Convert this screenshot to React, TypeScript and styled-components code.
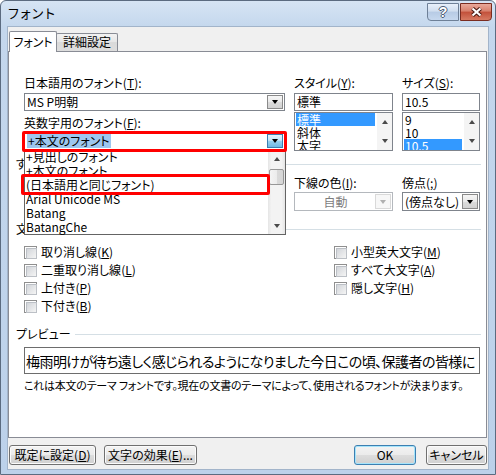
import React from "react";
import styled, {createGlobalStyle} from "styled-components";

const UI_FONT = `"Noto Sans CJK JP", "Liberation Sans", sans-serif`;

const GlobalStyle = createGlobalStyle`
    html, body {
        margin: 0;
        padding: 0;
    }
    body {
        width: 496px;
        height: 475px;
        overflow: hidden;
        background: #fff;
        font-family: ${UI_FONT};
        font-size: 12px;
        line-height: 14px;
        color: #000;
        font-feature-settings: "palt";
    }
    * {
        box-sizing: border-box;
    }
`;

const topFonts = ["+見出しのフォント", "+本文のフォント", "(日本語用と同じフォント)", "Arial Unicode MS", "Batang", "BatangChe"];

const leftChecks: [string, string][] = [["取り消し線", "K"], ["二重取り消し線", "L"], ["上付き", "P"], ["下付き", "B"]];
const rightChecks: [string, string][] = [["小型英大文字", "M"], ["すべて大文字", "A"], ["隠し文字", "H"]];

const Mnemonic = ({text, k, tail = ""}: { text: string, k: string, tail?: string }) => (
    <>{text}(<Key>{k}</Key>){tail}</>
);

export default function App() {
    return (
        <>
            <GlobalStyle/>
            <Window>
                <TitleBar>
                    <Title>フォント</Title>
                    <CaptionButtons>
                        <HelpButton>?</HelpButton>
                        <CloseButton>
                            <svg width="13" height="10" viewBox="0 0 13 10">
                                <path d="M2.5 1.5 L10.5 8.5 M10.5 1.5 L2.5 8.5" stroke="#4a1a12" strokeWidth="4.2"/>
                                <path d="M2.5 1.5 L10.5 8.5 M10.5 1.5 L2.5 8.5" stroke="#fff" strokeWidth="2.2"/>
                            </svg>
                        </CloseButton>
                    </CaptionButtons>
                </TitleBar>
                <Client>
                    <TabStrip>
                        <Tab $active $w={48}>フォント</Tab>
                        <Tab $w={62}>詳細設定</Tab>
                    </TabStrip>
                    <Panel>
                        <FontGrid>
                            <Column>
                                <Label><Mnemonic text="日本語用のフォント" k="T" tail=":"/></Label>
                                <Combo $mt={3}>
                                    <ComboText>MS P明朝</ComboText>
                                    <DropButton/>
                                </Combo>
                                <Label $mt={5}><Mnemonic text="英数字用のフォント" k="F" tail=":"/></Label>
                                <Combo $mt={2}>
                                    <ComboText><Selected>+本文のフォント</Selected></ComboText>
                                    <DropButton $hot/>
                                    <RedMark $t={-2} $r={-3} $b={-3} $l={-3}/>
                                    <DropList>
                                        <DropItems>
                                            {topFonts.map((f, i) => (
                                                <DropRow key={f}>
                                                    {f}
                                                    {i === 2 && <RedMark $t={-4} $r={-2} $b={-3} $l={-4}/>}
                                                </DropRow>
                                            ))}
                                        </DropItems>
                                        <ScrollBar>
                                            <ScrollArrow/>
                                            <Thumb/>
                                            <ScrollArrow $down/>
                                        </ScrollBar>
                                    </DropList>
                                </Combo>
                            </Column>
                            <Column>
                                <Label><Mnemonic text="スタイル" k="Y" tail=":"/></Label>
                                <Edit>標準</Edit>
                                <ListBox>
                                    <ListItems>
                                        <ListRow $selected>標準</ListRow>
                                        <ListRow>斜体</ListRow>
                                        <ListRow>太字</ListRow>
                                    </ListItems>
                                    <MiniScroll>
                                        <ScrollArrow $small/>
                                        <ScrollArrow $small $down/>
                                    </MiniScroll>
                                </ListBox>
                            </Column>
                            <Column>
                                <Label><Mnemonic text="サイズ" k="S" tail=":"/></Label>
                                <Edit>10.5</Edit>
                                <ListBox>
                                    <ListItems>
                                        <ListRow>9</ListRow>
                                        <ListRow>10</ListRow>
                                        <ListRow $selected>10.5</ListRow>
                                    </ListItems>
                                    <MiniScroll>
                                        <ScrollArrow $small/>
                                        <ScrollArrow $small $down/>
                                    </MiniScroll>
                                </ListBox>
                            </Column>
                        </FontGrid>

                        <SectionHeader $mt={6}>すべての文字列</SectionHeader>
                        <EffectsGrid>
                            {/* these two sit under the open drop-down list */}
                            <Column $covered>
                                <Label><Mnemonic text="フォントの色" k="C" tail=":"/></Label>
                                <Combo $mt={2} $h={19}>
                                    <ComboText>自動</ComboText>
                                    <DropButton/>
                                </Combo>
                            </Column>
                            <Column $covered>
                                <Label><Mnemonic text="下線" k="U" tail=":"/></Label>
                                <Combo $mt={2} $h={19}>
                                    <ComboText>(下線なし)</ComboText>
                                    <DropButton/>
                                </Combo>
                            </Column>
                            <Column>
                                <Label><Mnemonic text="下線の色" k="I" tail=":"/></Label>
                                <Combo $mt={2} $h={19} $disabled>
                                    <ComboText $center>自動</ComboText>
                                    <DropButton $disabled/>
                                </Combo>
                            </Column>
                            <Column>
                                <Label><Mnemonic text="傍点" k=";"/></Label>
                                <Combo $mt={2} $h={19}>
                                    <ComboText>(傍点なし)</ComboText>
                                    <DropButton/>
                                </Combo>
                            </Column>
                        </EffectsGrid>

                        <SectionHeader $mt={11}>文字飾り</SectionHeader>
                        <CheckGrid>
                            {[...leftChecks, ...rightChecks].map(([t, k]) => (
                                <CheckRow key={t}>
                                    <CheckBox/>
                                    <span><Mnemonic text={t} k={k}/></span>
                                </CheckRow>
                            ))}
                        </CheckGrid>

                        <SectionHeader $mt={12}>プレビュー</SectionHeader>
                        <PreviewBox>梅雨明けが待ち遠しく感じられるようになりました今日この頃、保護者の皆様に</PreviewBox>
                        <Note>これは本文のテーマ フォントです。現在の文書のテーマによって、使用されるフォントが決まります。</Note>
                    </Panel>
                    <ButtonRow>
                        <ButtonGroup $gap={8}>
                            <PushButton $w={87}><Mnemonic text="既定に設定" k="D"/></PushButton>
                            <PushButton $w={93}><Mnemonic text="文字の効果" k="E" tail="..."/></PushButton>
                        </ButtonGroup>
                        <ButtonGroup $gap={10}>
                            <PushButton $w={62} $default>OK</PushButton>
                            <PushButton $w={61}>キャンセル</PushButton>
                        </ButtonGroup>
                    </ButtonRow>
                </Client>
            </Window>
        </>
    );
}

const Window = styled.div`
    width: 496px;
    height: 475px;
    display: flex;
    flex-direction: column;
    padding: 0 6px 4px 6px;
    border: 1px solid #5b6b80;
    border-radius: 6px 6px 0 0;
    background: linear-gradient(to bottom, #d6e4f4 0, #c4d7ed 26px, #bcd1ea 100%);`
;
const TitleBar = styled.div`
    height: 25px;
    flex-shrink: 0;
    display: flex;
    justify-content: space-between;
    align-items: flex-start;
    margin-right: -3px;`
;
const Title = styled.div`
    padding-top: 5px;
    font-size: 13px;
    letter-spacing: -1px;
    font-feature-settings: normal;`
;
const CaptionButtons = styled.div`
    display: flex;
    gap: 1px;
    margin-top: 2px;`
;
const HelpButton = styled.div`
    width: 32px;
    height: 18px;
    border: 1px solid #6e8097;
    border-radius: 0 0 0 4px;
    background: linear-gradient(#e8f0fa 0%, #d0deef 45%, #b7cbe5 50%, #c6d8ee 100%);
    display: flex;
    align-items: center;
    justify-content: center;
    font-family: "Liberation Sans", sans-serif;
    font-weight: bold;
    font-size: 14px;
    color: #fff;
    text-shadow: 1px 0 0 #4b5c74, -1px 0 0 #4b5c74, 0 1px 0 #4b5c74, 0 -1px 0 #4b5c74;`
;
const CloseButton = styled.div`
    width: 32px;
    height: 18px;
    border: 1px solid #7a2c20;
    border-radius: 0 0 4px 0;
    background: linear-gradient(#e9a99a 0%, #d8806c 45%, #c2503a 50%, #d67a62 100%);
    display: flex;
    align-items: center;
    justify-content: center;`
;
const Client = styled.div`
    flex: 1;
    display: flex;
    flex-direction: column;
    padding: 4px 0 0 0;
    background: #f0f0f0;
    border: 1px solid #a2b4ca;`
;
const TabStrip = styled.div`
    height: 20px;
    display: flex;
    align-items: flex-end;
    padding-left: 1px;`
;
const Tab = styled.div<{ $active?: boolean, $w: number }>`
    position: relative;
    z-index: ${p => p.$active ? 1 : 0};
    width: ${p => p.$w}px;
    height: ${p => p.$active ? 21 : 18}px;
    margin-bottom: ${p => p.$active ? -1 : 0}px;
    margin-left: ${p => p.$active ? 0 : -1}px;
    padding-top: ${p => p.$active ? 3 : 1}px;
    border: 1px solid #898c95;
    border-bottom: none;
    border-radius: 2px 2px 0 0;
    background: ${p => p.$active ? "#fff" : "linear-gradient(#f2f2f2, #e6e6e6 50%, #dadada 50%, #dddddd)"};
    text-align: center;`
;
const Panel = styled.div`
    height: 387px;
    margin-right: 1px;
    padding: 24px 5px 0 7px;
    border: 1px solid #898c95;
    background: #fff;
    display: flex;
    flex-direction: column;`
;
const FontGrid = styled.div`
    margin-left: 8px;
    display: grid;
    grid-template-columns: 261px 99px 78px;
    column-gap: 9px;`
;
const EffectsGrid = styled.div`
    margin: 5px 0 0 8px;
    display: grid;
    grid-template-columns: 118px 134px 99px 78px;
    column-gap: 9px;`
;
const Column = styled.div<{ $covered?: boolean }>`
    display: flex;
    flex-direction: column;
    visibility: ${p => p.$covered ? "hidden" : "visible"};`
;
const Label = styled.div<{ $mt?: number }>`
    height: 14px;
    margin-top: ${p => p.$mt ?? 0}px;
    white-space: nowrap;`
;
const Key = styled.span`
    text-decoration: underline;`
;
const Combo = styled.div<{ $mt?: number, $h?: number, $disabled?: boolean }>`
    position: relative;
    display: flex;
    height: ${p => p.$h ?? 18}px;
    margin-top: ${p => p.$mt ?? 0}px;
    border: 1px solid ${p => p.$disabled ? "#b4b8bd" : "#7f848c"};
    background: #fff;
    color: ${p => p.$disabled ? "#7d7d7d" : "#000"};`
;
const ComboText = styled.div<{ $center?: boolean }>`
    flex: 1;
    display: flex;
    align-items: center;
    justify-content: ${p => p.$center ? "center" : "flex-start"};
    padding-left: 2px;
    white-space: nowrap;
    overflow: hidden;`
;
const Selected = styled.span`
    background: #9dc7ef;
    padding: 0 1px;`
;
const DropButton = styled.div<{ $hot?: boolean, $disabled?: boolean }>`
    width: 16px;
    margin: 1px;
    display: flex;
    align-items: center;
    justify-content: center;
    border: 1px solid ${p => p.$hot ? "#3c7fb1" : p.$disabled ? "#d9d9d9" : "#8a8a8a"};
    background: ${p => p.$hot
            ? "linear-gradient(#e5f4fc, #c4e5f6 45%, #98d1ef 50%, #6fb8e3)"
            : p.$disabled ? "#f7f7f7" : "linear-gradient(#f6f6f6, #e9e9e9 50%, #dcdcdc 50%, #d2d2d2)"};
    &::after {
        content: "";
        border-left: 3.5px solid transparent;
        border-right: 3.5px solid transparent;
        border-top: 4px solid ${p => p.$disabled ? "#b0b0b0" : "#000"};
    }`
;
const RedMark = styled.div<{ $t: number, $r: number, $b: number, $l: number }>`
    position: absolute;
    top: ${p => p.$t}px;
    right: ${p => p.$r}px;
    bottom: ${p => p.$b}px;
    left: ${p => p.$l}px;
    border: 3px solid #ff0000;
    border-radius: 2px;
    pointer-events: none;
    z-index: 6;`
;
const DropList = styled.div`
    position: absolute;
    top: 100%;
    left: -1px;
    width: calc(100% + 3px);
    height: 86px;
    z-index: 5;
    display: flex;
    border: 1px solid #646464;
    background: #fff;`
;
const DropItems = styled.div`
    flex: 1;`
;
const DropRow = styled.div`
    position: relative;
    height: 14px;
    padding-left: 1px;
    white-space: nowrap;`
;
const ScrollBar = styled.div`
    width: 17px;
    display: flex;
    flex-direction: column;
    background: linear-gradient(to right, #e5e5e5, #f3f3f3 20%, #f3f3f3 80%, #e5e5e5);`
;
const ScrollArrow = styled.div<{ $down?: boolean, $small?: boolean }>`
    height: ${p => p.$small ? 18 : 17}px;
    display: flex;
    align-items: center;
    justify-content: center;
    margin-top: ${p => p.$down && !p.$small ? "auto" : "0"};
    &::after {
        content: "";
        border-left: 3.5px solid transparent;
        border-right: 3.5px solid transparent;
        ${p => p.$down ? "border-top" : "border-bottom"}: 4px solid #4a4a4a;
    }`
;
const Thumb = styled.div`
    height: 16px;
    margin: 2px 1px 0 1px;
    border: 1px solid #979797;
    border-radius: 2px;
    background: linear-gradient(to right, #f4f4f4, #ececec 50%, #dadada 50%, #d6d6d6);`
;
const Edit = styled.div`
    height: 18px;
    margin-top: 3px;
    padding-left: 2px;
    display: flex;
    align-items: center;
    border: 1px solid #7f848c;
    background: #fff;`
;
const ListBox = styled.div`
    height: 39px;
    margin-top: 1px;
    display: flex;
    overflow: hidden;
    border: 1px solid #7f848c;
    background: #fff;`
;
const ListItems = styled.div`
    flex: 1;
    padding: 0 2px 0 1px;`
;
const ListRow = styled.div<{ $selected?: boolean }>`
    height: 13px;
    line-height: 13px;
    padding-left: 1px;
    white-space: nowrap;
    background: ${p => p.$selected ? "#3399ff" : "transparent"};
    color: ${p => p.$selected ? "#fff" : "#000"};`
;
const MiniScroll = styled.div`
    width: 15px;
    display: flex;
    flex-direction: column;
    justify-content: space-between;
    background: #f4f4f4;`
;
const SectionHeader = styled.div<{ $mt: number }>`
    height: 14px;
    margin-top: ${p => p.$mt}px;
    display: flex;
    align-items: center;
    white-space: nowrap;
    &::after {
        content: "";
        flex: 1;
        height: 1px;
        margin-left: 4px;
        background: #d5dfe5;
    }`
;
const CheckGrid = styled.div`
    margin: 7px 0 0 8px;
    display: grid;
    grid-template-columns: 310px 1fr;
    grid-template-rows: repeat(4, 18px);
    grid-auto-flow: column;`
;
const CheckRow = styled.label`
    display: flex;
    align-items: center;
    gap: 4px;
    white-space: nowrap;`
;
const CheckBox = styled.span`
    width: 13px;
    height: 13px;
    padding: 1px;
    border: 1px solid #8f8f8f;
    background: #fff;
    &::before {
        content: "";
        display: block;
        width: 100%;
        height: 100%;
        border: 1px solid #bcc0c6;
        background: linear-gradient(135deg, #d2d5da, #f5f5f5);
    }`
;
const PreviewBox = styled.div`
    width: 456px;
    height: 27px;
    margin: 6px 0 0 8px;
    padding-left: 1px;
    display: flex;
    align-items: center;
    border: 1px solid #6d6d6d;
    background: #fff;
    font-size: 14px;
    letter-spacing: -0.55px;
    white-space: nowrap;
    overflow: hidden;`
;
const Note = styled.div`
    margin: 4px 0 0 8px;
    font-size: 11px;
    letter-spacing: -0.25px;
    white-space: nowrap;`
;
const ButtonRow = styled.div`
    margin-top: 7px;
    padding: 0 1px;
    display: flex;
    justify-content: space-between;`
;
const ButtonGroup = styled.div<{ $gap: number }>`
    display: flex;
    gap: ${p => p.$gap}px;`
;
const PushButton = styled.button<{ $w: number, $default?: boolean }>`
    width: ${p => p.$w}px;
    height: 20px;
    padding: 0;
    font: inherit;
    color: #000;
    border: 1px solid ${p => p.$default ? "#3c7fb1" : "#707070"};
    border-radius: 3px;
    background: linear-gradient(#f3f3f3 0%, #ebebeb 50%, #dddddd 51%, #d0d0d0 100%);
    box-shadow: inset 0 0 0 1px ${p => p.$default ? "#a5e4fb" : "#fbfbfb"};`
;
